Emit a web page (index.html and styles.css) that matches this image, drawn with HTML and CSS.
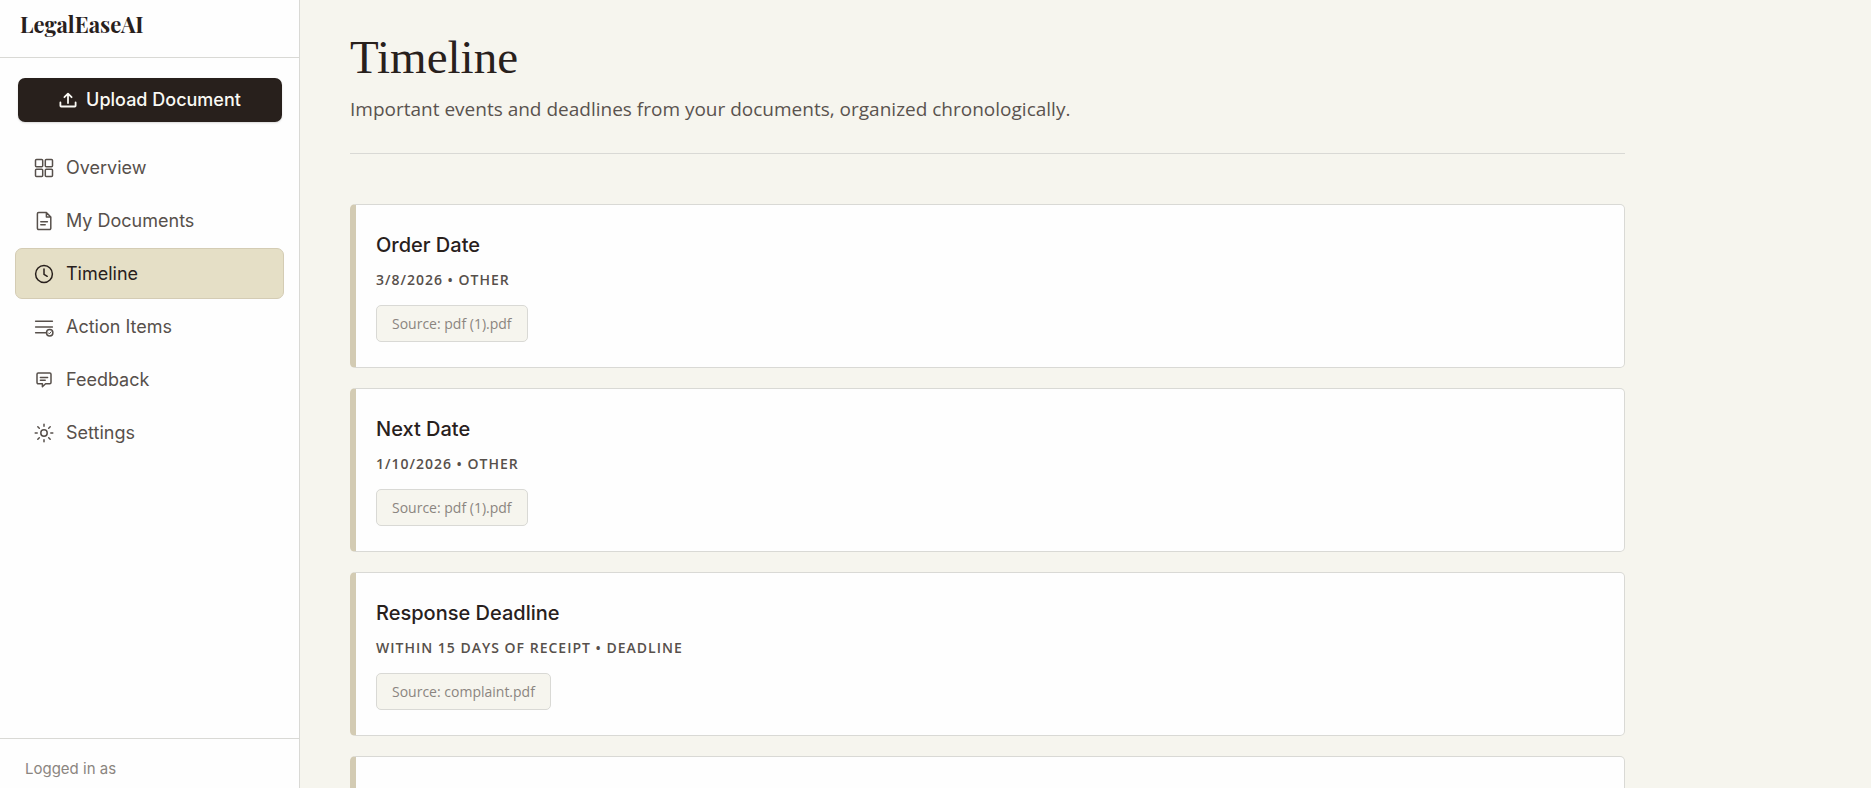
FILE: index.html
```html
<!DOCTYPE html>
<html lang="en">
<head>
    <meta charset="UTF-8">
    <meta name="viewport" content="width=device-width, initial-scale=1.0">
    <title>LegalEaseAI - Timeline</title>
    <link rel="stylesheet" href="styles.css">
</head>
<body>
    <aside class="sidebar">
        <div class="logo"><a href="#">LegalEaseAI</a></div>
        <div class="upload">
            <button type="button" class="upload-btn">
                <svg class="icon-upload" viewBox="0 0 18 18"><path d="M9 12V3M5.4 6.2L9 2.6l3.6 3.6M1.4 11.5v3.2a.8.8 0 0 0 .8.8h13.6a.8.8 0 0 0 .8-.8v-3.2"/></svg>
                Upload Document
            </button>
        </div>
        <nav>
            <ul>
                <li><a href="#">
                    <svg class="icon" viewBox="0 0 20 20"><rect x="1.5" y="1.5" width="7.2" height="7.2" rx="1"/><rect x="11.3" y="1.5" width="7.2" height="7.2" rx="1"/><rect x="1.5" y="11.3" width="7.2" height="7.2" rx="1"/><rect x="11.3" y="11.3" width="7.2" height="7.2" rx="1"/></svg>
                    Overview
                </a></li>
                <li><a href="#">
                    <svg class="icon" viewBox="0 0 20 20"><path d="M12.4 1.5H4.6a1.2 1.2 0 0 0-1.2 1.2v14.6a1.2 1.2 0 0 0 1.2 1.2h11a1.2 1.2 0 0 0 1.2-1.2V6zM12.4 1.5V6h4.4M6.8 10.8h6.6M6.8 13.8h4.4"/></svg>
                    My Documents
                </a></li>
                <li><a href="#" class="active">
                    <svg class="icon" viewBox="0 0 20 20"><circle cx="10" cy="10" r="8.4"/><path d="M10 5v5.4l3.2 1.9"/></svg>
                    Timeline
                </a></li>
                <li><a href="#">
                    <svg class="icon" viewBox="0 0 20 20"><path d="M1.6 4.2h16.8M1.6 10h16.8M1.6 15.8h10"/><circle cx="15.7" cy="15.8" r="3.2"/><path class="thin" d="M14.3 15.8l1 1 1.8-1.9"/></svg>
                    Action Items
                </a></li>
                <li><a href="#">
                    <svg class="icon" viewBox="0 0 20 20"><path d="M4.2 3h11.6A1.2 1.2 0 0 1 17 4.2v8.4a1.2 1.2 0 0 1-1.2 1.2h-4.2L8.4 16.8v-3H4.2A1.2 1.2 0 0 1 3 12.6V4.2A1.2 1.2 0 0 1 4.2 3zM6.4 7.4h7.2M6.4 10.2h4.8"/></svg>
                    Feedback
                </a></li>
                <li><a href="#">
                    <svg class="icon" viewBox="0 0 20 20"><circle cx="10" cy="10" r="3.2"/><path d="M10 1.2v2M10 16.8v2M1.2 10h2M16.8 10h2M3.8 3.8l1.5 1.5M14.7 14.7l1.5 1.5M3.8 16.2l1.5-1.5M14.7 5.3l1.5-1.5"/></svg>
                    Settings
                </a></li>
            </ul>
        </nav>
        <div class="user-info">
            <p>Logged in as</p>
        </div>
    </aside>
    <main>
        <header>
            <h1>Timeline</h1>
            <p>Important events and deadlines from your documents, organized chronologically.</p>
        </header>
        <div class="timeline">
            <article class="event-card">
                <h2>Order Date</h2>
                <p class="event-meta">3/8/2026 • Other</p>
                <span class="source">Source: pdf (1).pdf</span>
            </article>
            <article class="event-card">
                <h2>Next Date</h2>
                <p class="event-meta">1/10/2026 • Other</p>
                <span class="source">Source: pdf (1).pdf</span>
            </article>
            <article class="event-card">
                <h2>Response Deadline</h2>
                <p class="event-meta">Within 15 days of receipt • Deadline</p>
                <span class="source">Source: complaint.pdf</span>
            </article>
            <article class="event-card"></article>
        </div>
    </main>
</body>
</html>
```
FILE: styles.css
```css
* { margin: 0; padding: 0; box-sizing: border-box; }
body {
    display: flex;
    height: 100vh;
    overflow: hidden;
    font-family: 'Open Sans', 'Noto Sans', sans-serif;
    background-color: #f6f5ee;
    color: #28201c;
}
a { text-decoration: none; color: inherit; }

/* Sidebar */
.sidebar {
    display: flex;
    flex-direction: column;
    flex-shrink: 0;
    width: 300px;
    background-color: #fefefe;
    border-right: 1px solid #d9d9d5;
    font-family: 'Inter', sans-serif;
}
.logo {
    padding: 9px 20px 18px;
    border-bottom: 1px solid #d9d9d5;
    font-family: 'Playfair Display', 'Liberation Serif', serif;
    font-size: 22px;
    font-weight: bold;
    line-height: 30px;
}
.upload { padding: 20px 17px 20px 18px; }
.upload-btn {
    display: flex;
    align-items: center;
    justify-content: center;
    gap: 9px;
    width: 100%;
    height: 44px;
    padding-bottom: 1px;
    border: none;
    border-radius: 7px;
    background-color: #28201c;
    box-shadow: 0 1px 2px rgba(0, 0, 0, 0.15);
    color: #faf9f4;
    font-family: inherit;
    font-size: 18px;
    font-weight: 500;
    cursor: pointer;
}
nav {
    flex: 1;
    padding: 0 15px;
}
nav ul {
    display: flex;
    flex-direction: column;
    gap: 2px;
    list-style: none;
}
nav ul li a {
    display: flex;
    align-items: center;
    gap: 12px;
    height: 51px;
    padding: 0 18px;
    border: 1px solid transparent;
    border-radius: 7px;
    color: #57504b;
    font-size: 18px;
}
nav ul li a.active {
    background-color: #e5dfc6;
    border-color: #d4ccb4;
    color: #28201c;
}
.icon, .icon-upload {
    width: 20px;
    height: 20px;
    fill: none;
    stroke: currentColor;
    stroke-width: 1.5;
    stroke-linecap: round;
    stroke-linejoin: round;
}
.icon-upload {
    width: 18px;
    height: 18px;
    stroke-width: 1.8;
}
.icon .thin { stroke-width: 1; }
.user-info {
    padding: 20px 25px 9px;
    border-top: 1px solid #d9d9d5;
    color: #8b8580;
    font-size: 15px;
    line-height: 20px;
}

/* Page content */
main {
    flex: 1;
    max-width: 1375px;
    padding: 30px 50px;
    overflow-y: auto;
    scrollbar-width: none;
}
header {
    padding-bottom: 29px;
    margin-bottom: 50px;
    border-bottom: 1px solid #d9d9d5;
}
header h1 {
    font-family: 'Liberation Serif', serif;
    font-size: 47px;
    font-weight: normal;
    line-height: 54px;
}
header p {
    margin-top: 10px;
    color: #5a534e;
    font-size: 19px;
    line-height: 30px;
}
.timeline {
    display: flex;
    flex-direction: column;
    gap: 20px;
}
.event-card {
    min-height: 164px;
    padding: 25px 20px;
    background-color: #fefefe;
    border: 1px solid #d9d9d5;
    border-left: 6px solid #d3cbb3;
    border-radius: 5px;
}
.event-card h2 {
    margin-bottom: 10px;
    font-family: 'Inter', sans-serif;
    font-size: 20px;
    font-weight: 500;
    line-height: 30px;
}
.event-meta {
    margin-bottom: 15px;
    color: #57504b;
    font-size: 14px;
    font-weight: 600;
    letter-spacing: 1px;
    line-height: 20px;
    text-transform: uppercase;
}
.source {
    display: block;
    width: fit-content;
    padding: 0 15px;
    background-color: #f6f5ee;
    border: 1px solid #d9d9d5;
    border-radius: 5px;
    color: #8b8580;
    font-size: 14px;
    line-height: 35px;
}
```
